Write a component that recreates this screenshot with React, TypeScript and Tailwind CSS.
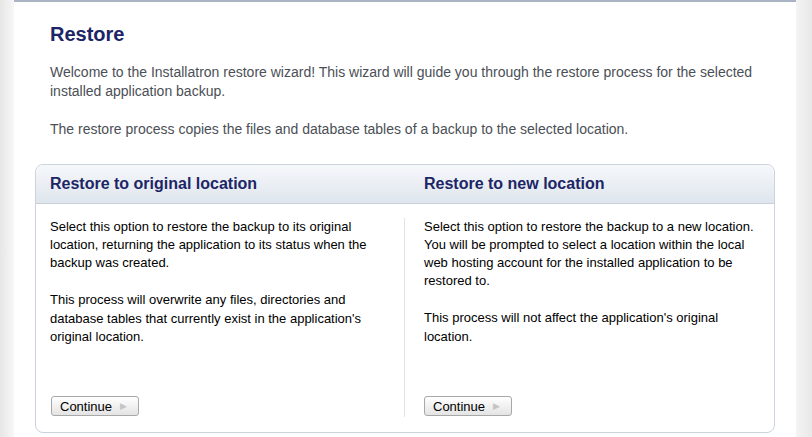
function ContinueButton() {
  return (
    <button className="flex h-[20px] w-[88px] items-center rounded-[3px] border border-[#a8a8a8] bg-gradient-to-b from-[#ffffff] to-[#e4e4e4] pl-[8px] text-[13px] leading-none text-black">
      Continue
      <span className="ml-[8px] text-[9px] text-[#c4c4c4]">▶</span>
    </button>
  );
}

function App() {
  return (
    <div
      className="flex h-[437px] w-[812px] overflow-hidden"
      style={{ fontFamily: '"Liberation Sans", Arial, sans-serif' }}
    >
      <div className="w-[14px] bg-gradient-to-r from-[#e6e6e6] to-[#f7f7f7]" />
      <div className="flex flex-1 flex-col border-t-2 border-[#a9b3c4] bg-white">
        <div className="px-[36px] pt-[19px]">
          <h1 className="text-[20px] font-bold leading-[26px] text-[#1c2566]">Restore</h1>
          <p className="mt-[16px] text-[14px] leading-[19px] text-[#4b4f56]">
            Welcome to the Installatron restore wizard! This wizard will guide you through the restore process for the selected installed application backup.
          </p>
          <p className="mt-[19px] text-[14px] leading-[19px] text-[#4b4f56]">
            The restore process copies the files and database tables of a backup to the selected location.
          </p>
        </div>
        <div className="mx-[21px] mt-[25px] flex h-[269px] flex-col rounded-[8px] border border-[#cbd3de]">
          <div className="grid h-[39px] grid-cols-2 rounded-t-[8px] border-b border-[#c8d0dc] bg-gradient-to-b from-[#f6f8fb] to-[#dfe5ed]">
            <div className="flex items-center pl-[14px] text-[16px] font-bold text-[#1c2566]">Restore to original location</div>
            <div className="flex items-center pl-[19px] text-[16px] font-bold text-[#1c2566]">Restore to new location</div>
          </div>
          <div className="grid flex-1 grid-cols-2 pb-[15px] pt-[14px]">
            <div className="flex flex-col border-r border-[#e2e2e2] pb-[1px] pl-[14px] pr-[20px]">
              <p className="text-[13px] leading-[18px] text-black">
                Select this option to restore the backup to its original location, returning the application to its status when the backup was created.
              </p>
              <p className="mt-[19px] text-[13px] leading-[18.5px] text-black">
                This process will overwrite any files, directories and database tables that currently exist in the application's original location.
              </p>
              <div className="mt-auto pl-[1px]">
                <ContinueButton />
              </div>
            </div>
            <div className="flex flex-col pb-[1px] pl-[19px] pr-[14px]">
              <p className="text-[13px] leading-[18px] text-black">
                Select this option to restore the backup to a new location. You will be prompted to select a location within the local web hosting account for the installed application to be restored to.
              </p>
              <p className="mt-[19px] text-[13px] leading-[18.5px] text-black">
                This process will not affect the application's original location.
              </p>
              <div className="mt-auto">
                <ContinueButton />
              </div>
            </div>
          </div>
        </div>
      </div>
      <div className="w-[16px] bg-gradient-to-r from-[#f4f4f4] to-[#e8e8e8]" />
    </div>
  );
}

export default App;
